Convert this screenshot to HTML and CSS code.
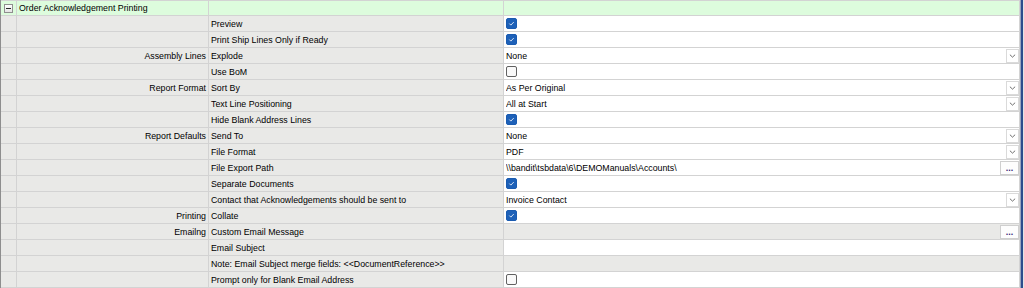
FILE: index.html
```html
<!DOCTYPE html>
<html>
<head>
<meta charset="utf-8">
<title>Order Acknowledgement Printing</title>
<link rel="stylesheet" href="styles.css">
</head>
<body>
<div class="frame">
  <div class="grid">
    <div class="row group">
      <div class="c0"><span class="toggle"></span></div>
      <div class="cat title">Order Acknowledgement Printing</div>
      <div class="prop"></div>
      <div class="val"></div>
    </div>

    <div class="row">
      <div class="c0"></div><div class="cat"></div>
      <div class="prop">Preview</div>
      <div class="val"><span class="chk on"><svg viewBox="0 0 10 10"><path d="M2.6 5.1 L4.3 6.8 L7.5 3.4"/></svg></span></div>
    </div>
    <div class="row">
      <div class="c0"></div><div class="cat"></div>
      <div class="prop">Print Ship Lines Only if Ready</div>
      <div class="val"><span class="chk on"><svg viewBox="0 0 10 10"><path d="M2.6 5.1 L4.3 6.8 L7.5 3.4"/></svg></span></div>
    </div>
    <div class="row">
      <div class="c0"></div><div class="cat">Assembly Lines</div>
      <div class="prop">Explode</div>
      <div class="val"><span class="txt">None</span><span class="drop"><svg viewBox="0 0 8 4"><path d="M1 0.5 L4 3.3 L7 0.5"/></svg></span></div>
    </div>
    <div class="row">
      <div class="c0"></div><div class="cat"></div>
      <div class="prop">Use BoM</div>
      <div class="val"><span class="chk"></span></div>
    </div>
    <div class="row">
      <div class="c0"></div><div class="cat">Report Format</div>
      <div class="prop">Sort By</div>
      <div class="val"><span class="txt">As Per Original</span><span class="drop"><svg viewBox="0 0 8 4"><path d="M1 0.5 L4 3.3 L7 0.5"/></svg></span></div>
    </div>
    <div class="row">
      <div class="c0"></div><div class="cat"></div>
      <div class="prop">Text Line Positioning</div>
      <div class="val"><span class="txt">All at Start</span><span class="drop"><svg viewBox="0 0 8 4"><path d="M1 0.5 L4 3.3 L7 0.5"/></svg></span></div>
    </div>
    <div class="row">
      <div class="c0"></div><div class="cat"></div>
      <div class="prop">Hide Blank Address Lines</div>
      <div class="val"><span class="chk on"><svg viewBox="0 0 10 10"><path d="M2.6 5.1 L4.3 6.8 L7.5 3.4"/></svg></span></div>
    </div>
    <div class="row">
      <div class="c0"></div><div class="cat">Report Defaults</div>
      <div class="prop">Send To</div>
      <div class="val"><span class="txt">None</span><span class="drop"><svg viewBox="0 0 8 4"><path d="M1 0.5 L4 3.3 L7 0.5"/></svg></span></div>
    </div>
    <div class="row">
      <div class="c0"></div><div class="cat"></div>
      <div class="prop">File Format</div>
      <div class="val"><span class="txt">PDF</span><span class="drop"><svg viewBox="0 0 8 4"><path d="M1 0.5 L4 3.3 L7 0.5"/></svg></span></div>
    </div>
    <div class="row">
      <div class="c0"></div><div class="cat"></div>
      <div class="prop">File Export Path</div>
      <div class="val"><span class="txt">\\bandit\tsbdata\6\DEMOManuals\Accounts\</span><span class="more">...</span></div>
    </div>
    <div class="row">
      <div class="c0"></div><div class="cat"></div>
      <div class="prop">Separate Documents</div>
      <div class="val"><span class="chk on"><svg viewBox="0 0 10 10"><path d="M2.6 5.1 L4.3 6.8 L7.5 3.4"/></svg></span></div>
    </div>
    <div class="row">
      <div class="c0"></div><div class="cat"></div>
      <div class="prop">Contact that Acknowledgements should be sent to</div>
      <div class="val"><span class="txt">Invoice Contact</span><span class="drop"><svg viewBox="0 0 8 4"><path d="M1 0.5 L4 3.3 L7 0.5"/></svg></span></div>
    </div>
    <div class="row">
      <div class="c0"></div><div class="cat">Printing</div>
      <div class="prop">Collate</div>
      <div class="val"><span class="chk on"><svg viewBox="0 0 10 10"><path d="M2.6 5.1 L4.3 6.8 L7.5 3.4"/></svg></span></div>
    </div>
    <div class="row">
      <div class="c0"></div><div class="cat">Emailng</div>
      <div class="prop">Custom Email Message</div>
      <div class="val ro"><span class="txt"></span><span class="more">...</span></div>
    </div>
    <div class="row">
      <div class="c0"></div><div class="cat"></div>
      <div class="prop">Email Subject</div>
      <div class="val"></div>
    </div>
    <div class="row">
      <div class="c0"></div><div class="cat"></div>
      <div class="prop">Note: Email Subject merge fields: &lt;&lt;DocumentReference&gt;&gt;</div>
      <div class="val ro"></div>
    </div>
    <div class="row">
      <div class="c0"></div><div class="cat"></div>
      <div class="prop">Prompt only for Blank Email Address</div>
      <div class="val"><span class="chk"></span></div>
    </div>
  </div>
  <div class="edge"></div>
</div>
</body>
</html>
```
FILE: styles.css
```css
html, body {
  margin: 0;
  padding: 0;
  background: #ffffff;
  overflow: hidden;
}

body {
  font-family: "Liberation Sans", Arial, sans-serif;
  font-size: 8.8px;
  color: #000000;
}

.frame {
  display: flex;
  width: 1024px;
  height: 288px;
  overflow: hidden;
}

.grid {
  width: 1020px;
  flex: none;
  display: flex;
  flex-direction: column;
  border-left: 1px solid #8e8e8e;
  box-sizing: border-box;
}

.row {
  display: grid;
  grid-template-columns: 16px 192px 295px 516px;
  height: 16px;
  flex: none;
  border-bottom: 1px solid #d3d3d3;
  box-sizing: border-box;
}

.row.group {
  border-top: 1px solid #d3d3d3;
}

.row > div {
  border-right: 1px solid #d3d3d3;
  box-sizing: border-box;
  white-space: nowrap;
  overflow: hidden;
  padding-top: 1px;
  line-height: 15px;
  background: #e9e9e7;
}

.row.group > div {
  background: #ddfcdd;
  padding-top: 0;
  line-height: 15px;
}

.row > .c0 {
  display: flex;
  align-items: center;
  justify-content: center;
  padding-top: 0;
}

.cat {
  text-align: right;
  padding-right: 2px;
}

.cat.title {
  text-align: left;
  padding-left: 2px;
}

.prop {
  padding-left: 2px;
}

.row > .val {
  background: #ffffff;
  padding-left: 2px;
  padding-top: 0;
  display: flex;
  align-items: center;
}

.row > .val.ro {
  background: #e9e9e7;
}

.txt {
  flex: 1;
  overflow: hidden;
  padding-top: 1px;
}

.toggle {
  position: relative;
  width: 9px;
  height: 9px;
  box-sizing: border-box;
  border: 1px solid #8f8f8f;
  background: linear-gradient(#ffffff, #e4e4e4);
  margin-left: -1px;
}

.toggle::after {
  content: "";
  position: absolute;
  left: 1px;
  top: 3px;
  width: 5px;
  height: 1px;
  background: #2a2a2a;
}

.chk {
  width: 11px;
  height: 11px;
  box-sizing: border-box;
  border: 1px solid #616161;
  border-radius: 2px;
  background: #f9f9f9;
  display: flex;
  align-items: center;
  justify-content: center;
}

.chk.on {
  border-color: #1a5bb0;
  background: #1e61b8;
}

.chk svg {
  width: 9px;
  height: 9px;
}

.chk svg path {
  fill: none;
  stroke: #ffffff;
  stroke-width: 0.9;
}

.drop {
  width: 13px;
  height: 14px;
  box-sizing: border-box;
  border: 1px solid #dadada;
  background: #ffffff;
  display: flex;
  align-items: center;
  justify-content: center;
}

.drop svg {
  width: 7px;
  height: 4px;
}

.drop svg path {
  fill: none;
  stroke: #5a5a5a;
  stroke-width: 1;
}

.more {
  width: 19px;
  height: 14px;
  box-sizing: border-box;
  border: 1px solid #cfcfcf;
  background: #fdfdfd;
  color: #3a2a7a;
  font-size: 9px;
  font-weight: bold;
  line-height: 12px;
  text-align: center;
}

.edge {
  width: 2px;
  flex: none;
  background: #2d4d8d;
  border-left: 1px solid #9aa6bf;
  border-right: 1px solid #e4e4e4;
}
```
